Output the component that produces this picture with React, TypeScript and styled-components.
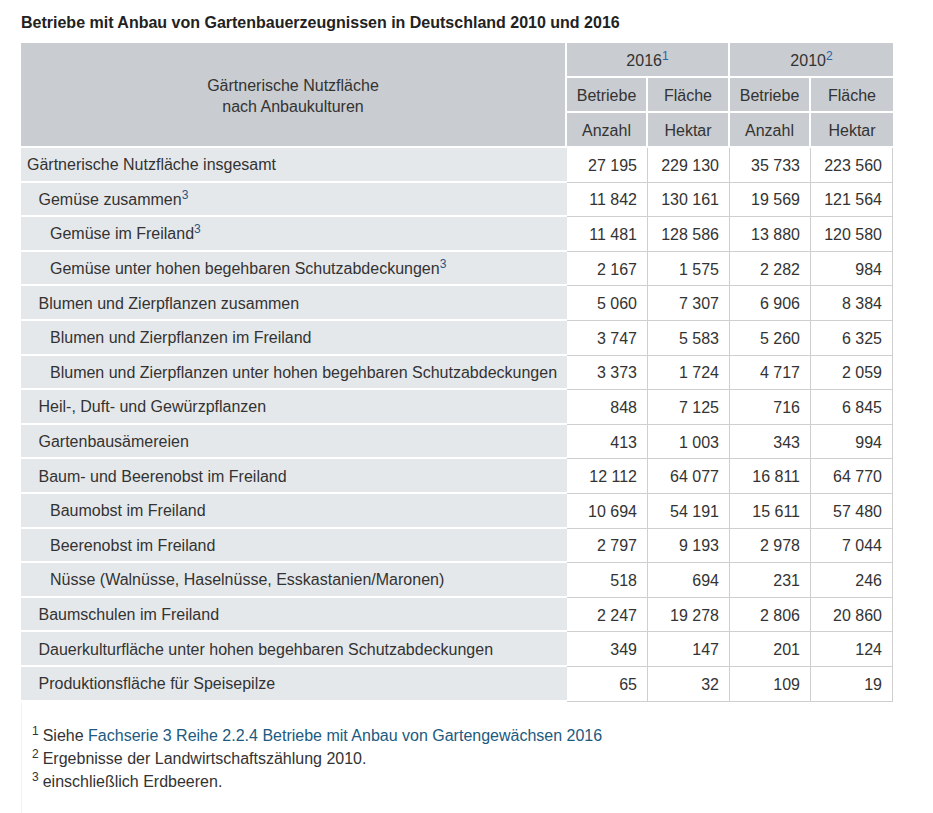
import React from "react";
import styled, { createGlobalStyle } from "styled-components";

const Global = createGlobalStyle`
  html, body { margin: 0; padding: 0; background: #fff; }
  body { font-family: "Liberation Sans", Arial, sans-serif; color: #333; }
`;

const Page = styled.div`
  padding: 13px 0 0 21px;
`;

const Title = styled.h2`
  margin: 0 0 10px;
  font-size: 16px;
  line-height: 20px;
  font-weight: bold;
  color: #222;
`;

const Table = styled.table`
  border-collapse: separate;
  border-spacing: 0;
  table-layout: fixed;
  width: 872px;
  font-size: 16px;
`;

const HeadRow = styled.tr`
  height: 35px;
`;

const BodyRow = styled.tr`
  height: 34.6px;
`;

const Th = styled.th<{ $last?: boolean }>`
  background: #c9ccd0;
  color: #333;
  font-weight: normal;
  text-align: center;
  padding: 2px 4px 0;
  line-height: 21px;
  border-bottom: 2px solid #fff;
  border-right: ${(p) => (p.$last ? "none" : "2px solid #fff")};
  box-sizing: border-box;
`;

const LabelCell = styled.td<{ $level: number }>`
  background: #e5e8eb;
  text-align: left;
  padding: 2px 0 0 ${(p) => 6 + p.$level * 11.5}px;
  border-bottom: 2px solid #fff;
  white-space: nowrap;
  line-height: 20px;
`;

const NumCell = styled.td`
  background: #fff;
  text-align: right;
  padding: 2px 10px 0 0;
  border-right: 1px solid #cfcfcf;
  border-bottom: 1px solid #cfcfcf;
  line-height: 20px;
  white-space: nowrap;
`;

const HeadSup = styled.sup`
  font-size: 12px;
  line-height: 0;
  vertical-align: 6px;
  color: #2367ad;
`;

const LinkSup = styled.sup`
  font-size: 12px;
  line-height: 0;
  vertical-align: 6px;
  color: #1e5684;
`;

const Notes = styled.div`
  margin-top: 1px;
  padding: 21px 0 30px 0;
  width: 872px;
  border-left: 1px solid #f1f1f1;
  font-size: 16px;
  line-height: 23px;
`;

const NoteLine = styled.div`
  padding-left: 10px;
`;

const NoteSup = styled.sup`
  font-size: 12px;
  line-height: 0;
  vertical-align: 6px;
  margin-right: 4px;
`;

const NoteLink = styled.a`
  color: #205a80;
  text-decoration: none;
`;

type Row = { label: string; level: number; sup?: string; v: [string, string, string, string] };

const rows: Row[] = [
  { label: "Gärtnerische Nutzfläche insgesamt", level: 0, v: ["27 195", "229 130", "35 733", "223 560"] },
  { label: "Gemüse zusammen", level: 1, sup: "3", v: ["11 842", "130 161", "19 569", "121 564"] },
  { label: "Gemüse im Freiland", level: 2, sup: "3", v: ["11 481", "128 586", "13 880", "120 580"] },
  { label: "Gemüse unter hohen begehbaren Schutzabdeckungen", level: 2, sup: "3", v: ["2 167", "1 575", "2 282", "984"] },
  { label: "Blumen und Zierpflanzen zusammen", level: 1, v: ["5 060", "7 307", "6 906", "8 384"] },
  { label: "Blumen und Zierpflanzen im Freiland", level: 2, v: ["3 747", "5 583", "5 260", "6 325"] },
  { label: "Blumen und Zierpflanzen unter hohen begehbaren Schutzabdeckungen", level: 2, v: ["3 373", "1 724", "4 717", "2 059"] },
  { label: "Heil-, Duft- und Gewürzpflanzen", level: 1, v: ["848", "7 125", "716", "6 845"] },
  { label: "Gartenbausämereien", level: 1, v: ["413", "1 003", "343", "994"] },
  { label: "Baum- und Beerenobst im Freiland", level: 1, v: ["12 112", "64 077", "16 811", "64 770"] },
  { label: "Baumobst im Freiland", level: 2, v: ["10 694", "54 191", "15 611", "57 480"] },
  { label: "Beerenobst im Freiland", level: 2, v: ["2 797", "9 193", "2 978", "7 044"] },
  { label: "Nüsse (Walnüsse, Haselnüsse, Esskastanien/Maronen)", level: 2, v: ["518", "694", "231", "246"] },
  { label: "Baumschulen im Freiland", level: 1, v: ["2 247", "19 278", "2 806", "20 860"] },
  { label: "Dauerkulturfläche unter hohen begehbaren Schutzabdeckungen", level: 1, v: ["349", "147", "201", "124"] },
  { label: "Produktionsfläche für Speisepilze", level: 1, v: ["65", "32", "109", "19"] },
];

export default function App() {
  return (
    <Page>
      <Global />
      <Title>Betriebe mit Anbau von Gartenbauerzeugnissen in Deutschland 2010 und 2016</Title>
      <Table>
        <colgroup>
          <col style={{ width: 546 }} />
          <col style={{ width: 81 }} />
          <col style={{ width: 82 }} />
          <col style={{ width: 81 }} />
          <col style={{ width: 82 }} />
        </colgroup>
        <thead>
          <HeadRow>
            <Th rowSpan={3}>
              Gärtnerische Nutzfläche
              <br />
              nach Anbaukulturen
            </Th>
            <Th colSpan={2}>
              2016<HeadSup>1</HeadSup>
            </Th>
            <Th colSpan={2} $last>
              2010<HeadSup>2</HeadSup>
            </Th>
          </HeadRow>
          <HeadRow>
            <Th>Betriebe</Th>
            <Th>Fläche</Th>
            <Th>Betriebe</Th>
            <Th $last>Fläche</Th>
          </HeadRow>
          <HeadRow>
            <Th>Anzahl</Th>
            <Th>Hektar</Th>
            <Th>Anzahl</Th>
            <Th $last>Hektar</Th>
          </HeadRow>
        </thead>
        <tbody>
          {rows.map((r) => (
            <BodyRow key={r.label}>
              <LabelCell $level={r.level}>
                {r.label}
                {r.sup && <LinkSup>{r.sup}</LinkSup>}
              </LabelCell>
              {r.v.map((n, i) => (
                <NumCell key={i}>{n}</NumCell>
              ))}
            </BodyRow>
          ))}
        </tbody>
      </Table>
      <Notes>
        <NoteLine>
          <NoteSup>1</NoteSup>Siehe <NoteLink href="#">Fachserie 3 Reihe 2.2.4 Betriebe mit Anbau von Gartengewächsen 2016</NoteLink>
        </NoteLine>
        <NoteLine>
          <NoteSup>2</NoteSup>Ergebnisse der Landwirtschaftszählung 2010.
        </NoteLine>
        <NoteLine>
          <NoteSup>3</NoteSup>einschließlich Erdbeeren.
        </NoteLine>
      </Notes>
    </Page>
  );
}
